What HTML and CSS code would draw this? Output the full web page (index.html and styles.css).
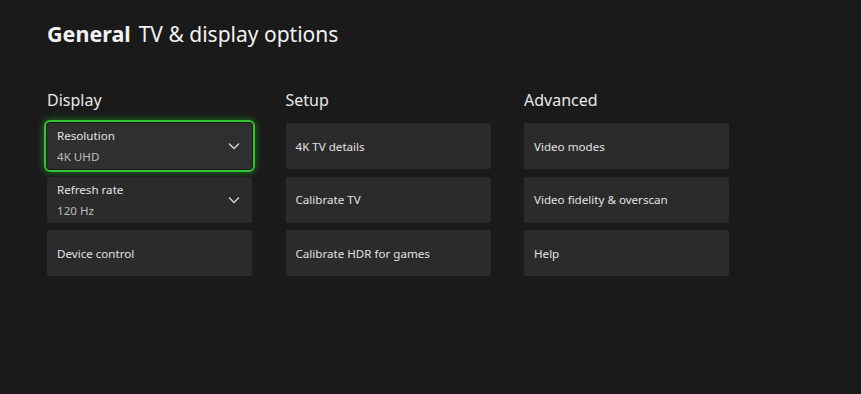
FILE: index.html
```html
<!DOCTYPE html>
<html lang="en">
<head>
  <meta charset="UTF-8" />
  <title>TV &amp; display options</title>
  <link rel="stylesheet" href="styles.css">
</head>
<body>

  <header class="page-title">
    <span class="section">General</span>
    <span class="page">TV &amp; display options</span>
  </header>

  <main class="columns">
    <section class="group">
      <h2>Display</h2>
      <div class="tile focused">
        <div class="tile-text">
          <div class="label">Resolution</div>
          <div class="value">4K UHD</div>
        </div>
        <svg class="chevron" viewBox="0 0 12 8" width="12" height="8"><path d="M1 1.5 L6 6.5 L11 1.5" fill="none" stroke="#d8d8d8" stroke-width="1.3"/></svg>
      </div>
      <div class="tile">
        <div class="tile-text">
          <div class="label">Refresh rate</div>
          <div class="value">120 Hz</div>
        </div>
        <svg class="chevron" viewBox="0 0 12 8" width="12" height="8"><path d="M1 1.5 L6 6.5 L11 1.5" fill="none" stroke="#d8d8d8" stroke-width="1.3"/></svg>
      </div>
      <div class="tile">
        <div class="label">Device control</div>
      </div>
    </section>

    <section class="group">
      <h2>Setup</h2>
      <div class="tile"><div class="label">4K TV details</div></div>
      <div class="tile"><div class="label">Calibrate TV</div></div>
      <div class="tile"><div class="label">Calibrate HDR for games</div></div>
    </section>

    <section class="group">
      <h2>Advanced</h2>
      <div class="tile"><div class="label">Video modes</div></div>
      <div class="tile"><div class="label">Video fidelity &amp; overscan</div></div>
      <div class="tile"><div class="label">Help</div></div>
    </section>
  </main>

</body>
</html>
```

FILE: styles.css
```css
* {
  margin: 0;
  padding: 0;
  box-sizing: border-box;
  font-family: 'Noto Sans', 'Open Sans', sans-serif;
}

body {
  background-color: #1a1a1a;
  color: #e6e6e6;
  width: 861px;
  height: 394px;
  overflow: hidden;
}

.page-title {
  padding: 19px 0 0 47px;
  display: flex;
  align-items: baseline;
  gap: 8px;
  font-size: 21px;
  color: #f2f2f2;
}

.page-title .section {
  font-weight: bold;
  font-size: 21.5px;
}

.columns {
  display: flex;
  gap: 33.5px;
  padding: 41px 0 0 47px;
}

.group {
  width: 205px;
  display: flex;
  flex-direction: column;
  gap: 7.5px;
}

.group h2 {
  font-size: 16px;
  font-weight: normal;
  color: #e8e8e8;
  margin-bottom: 4.5px;
}

.tile {
  height: 46px;
  background-color: #2b2b2b;
  border-radius: 2px;
  padding: 0 11px 0 10px;
  display: flex;
  align-items: center;
  justify-content: space-between;
  font-size: 11.6px;
  color: #e2e2e2;
}

.tile-text .label {
  line-height: 21px;
}

.tile-text .value {
  line-height: 21px;
  color: #bdbdbd;
}

.focused {
  background-color: #2f2f2f;
  outline: 2px solid #33c433;
  outline-offset: 1px;
  border-radius: 3px;
  box-shadow: 0 0 0 3px #1a1a1a, 0 0 7px 4px rgba(40, 190, 40, 0.45);
}

.chevron {
  margin-right: 1px;
}
```
